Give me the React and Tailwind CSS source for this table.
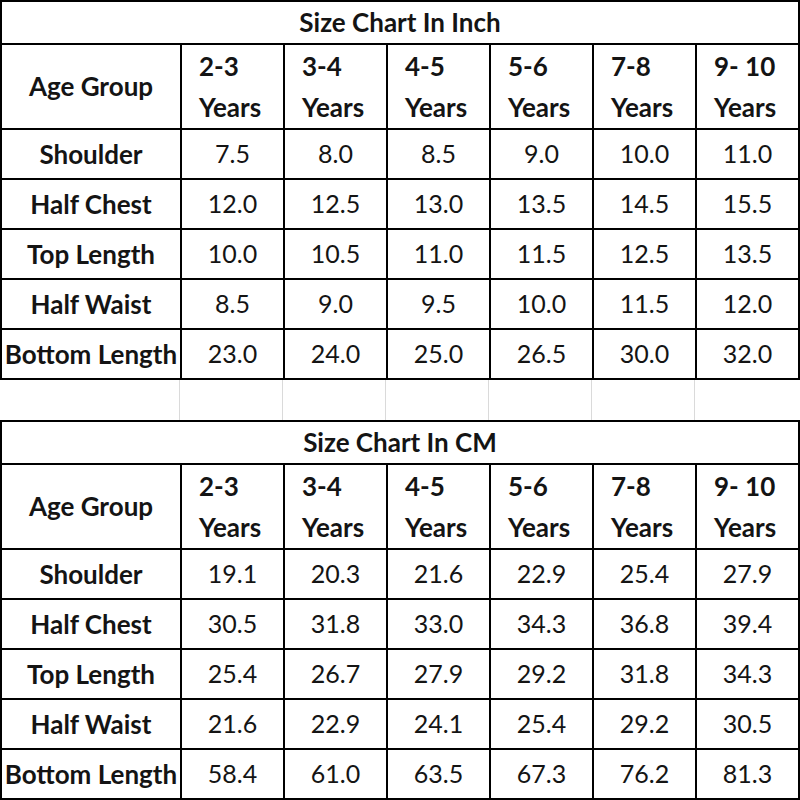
import React from 'react';

const ages = [
  ['2-3', 'Years'],
  ['3-4', 'Years'],
  ['4-5', 'Years'],
  ['5-6', 'Years'],
  ['7-8', 'Years'],
  ['9- 10', 'Years'],
];

const inchRows = [
  ['Shoulder', '7.5', '8.0', '8.5', '9.0', '10.0', '11.0'],
  ['Half Chest', '12.0', '12.5', '13.0', '13.5', '14.5', '15.5'],
  ['Top Length', '10.0', '10.5', '11.0', '11.5', '12.5', '13.5'],
  ['Half Waist', '8.5', '9.0', '9.5', '10.0', '11.5', '12.0'],
  ['Bottom Length', '23.0', '24.0', '25.0', '26.5', '30.0', '32.0'],
];

const cmRows = [
  ['Shoulder', '19.1', '20.3', '21.6', '22.9', '25.4', '27.9'],
  ['Half Chest', '30.5', '31.8', '33.0', '34.3', '36.8', '39.4'],
  ['Top Length', '25.4', '26.7', '27.9', '29.2', '31.8', '34.3'],
  ['Half Waist', '21.6', '22.9', '24.1', '25.4', '29.2', '30.5'],
  ['Bottom Length', '58.4', '61.0', '63.5', '67.3', '76.2', '81.3'],
];

const SizeTable = ({ title, rows }) => (
  <div className="grid grid-cols-[178px_repeat(6,101px)] grid-rows-[41px_83px_repeat(5,48px)] gap-[2px] bg-black p-[2px]">
    {/* Title */}
    <div className="col-span-7 bg-white flex items-center justify-center font-bold text-[26px]">
      {title}
    </div>

    {/* Header */}
    <div className="bg-white flex items-center justify-center font-bold text-[26px]">Age Group</div>
    {ages.map(([range, label]) => (
      <div key={range} className="bg-white flex flex-col justify-center pl-[17px] font-bold text-[26px] leading-[41px]">
        <span>{range}</span>
        <span>{label}</span>
      </div>
    ))}

    {/* Rows */}
    {rows.map((row) =>
      row.map((cell, i) => (
        <div
          key={row[0] + i}
          className={
            i === 0
              ? 'bg-white flex items-center justify-center font-bold text-[26px] whitespace-nowrap'
              : 'bg-white flex items-center justify-center text-[25px]'
          }
        >
          {cell}
        </div>
      ))
    )}
  </div>
);

const App = () => {
  return (
    <div className="w-[800px] h-[800px] bg-white text-[#141414] overflow-hidden font-['Lato','Open_Sans',sans-serif]">
      <SizeTable title="Size Chart In Inch" rows={inchRows} />

      {/* Blank spacer row */}
      <div className="grid grid-cols-[180px_repeat(6,103px)] h-[40px]">
        {Array.from({ length: 7 }).map((_, i) => (
          <div key={i} className={i < 6 ? 'border-r border-[#dadada]' : ''} />
        ))}
      </div>

      <SizeTable title="Size Chart In CM" rows={cmRows} />
    </div>
  );
};

export default App;
